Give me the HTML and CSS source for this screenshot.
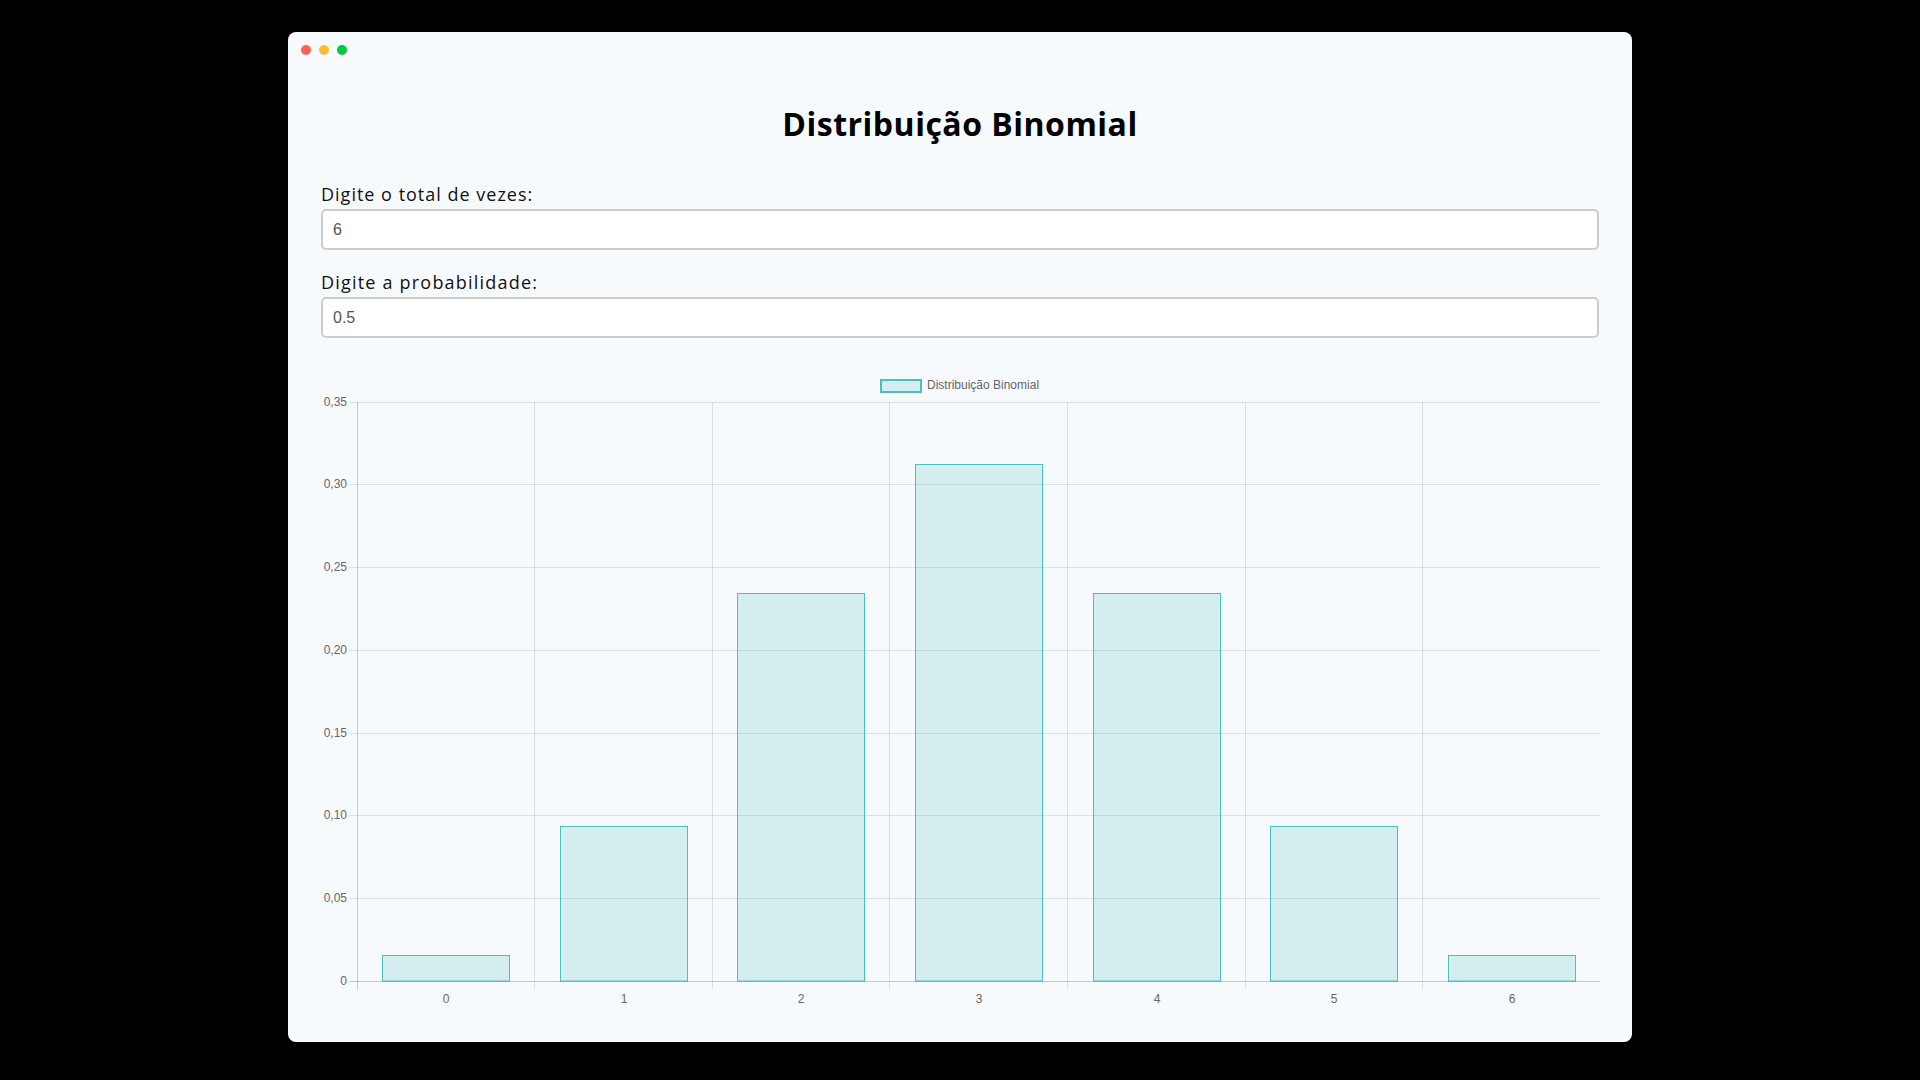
FILE: index.html
```html
<!DOCTYPE html>
<html lang="pt">
<head>
<meta charset="utf-8">
<title>Distribuição Binomial</title>
<link rel="stylesheet" href="styles.css">
</head>
<body>
<div class="window">
  <div class="titlebar">
    <span class="dot red"></span>
    <span class="dot yellow"></span>
    <span class="dot green"></span>
  </div>
  <div class="content">
    <h1 class="title">Distribuição Binomial</h1>
    <label class="label" for="n">Digite o total de vezes:</label>
    <input class="field" id="n" type="text" value="6">
    <label class="label label-second" for="p">Digite a probabilidade:</label>
    <input class="field" id="p" type="text" value="0.5">
    <svg class="chart" width="1279" height="680" viewBox="0 0 1279 680" xmlns="http://www.w3.org/2000/svg">
      <!-- legend -->
      <rect x="560" y="35" width="40" height="12" fill="rgba(75,192,192,0.2)" stroke="rgb(75,192,192)" stroke-width="2"/>
      <text class="tick" x="606" y="41" dominant-baseline="middle">Distribuição Binomial</text>

      <!-- horizontal grid -->
      <g stroke="rgba(0,0,0,0.1)" stroke-width="1">
        <line x1="28" y1="57.5" x2="1279" y2="57.5"/>
        <line x1="28" y1="139.5" x2="1279" y2="139.5"/>
        <line x1="28" y1="222.5" x2="1279" y2="222.5"/>
        <line x1="28" y1="305.5" x2="1279" y2="305.5"/>
        <line x1="28" y1="388.5" x2="1279" y2="388.5"/>
        <line x1="28" y1="470.5" x2="1279" y2="470.5"/>
        <line x1="28" y1="553.5" x2="1279" y2="553.5"/>
      </g>
      <!-- vertical grid -->
      <g stroke="rgba(0,0,0,0.1)" stroke-width="1">
        <line x1="213.5" y1="57" x2="213.5" y2="644"/>
        <line x1="391.5" y1="57" x2="391.5" y2="644"/>
        <line x1="568.5" y1="57" x2="568.5" y2="644"/>
        <line x1="746.5" y1="57" x2="746.5" y2="644"/>
        <line x1="924.5" y1="57" x2="924.5" y2="644"/>
        <line x1="1101.5" y1="57" x2="1101.5" y2="644"/>
      </g>

      <!-- bars -->
      <g fill="rgba(75,192,192,0.2)" stroke="rgb(75,192,192)" stroke-width="1">
        <rect x="61.5" y="610.5" width="127" height="25.5"/>
        <rect x="239.5" y="481.5" width="127" height="154.5"/>
        <rect x="416.5" y="248.5" width="127" height="387.5"/>
        <rect x="594.5" y="119.5" width="127" height="516.5"/>
        <rect x="772.5" y="248.5" width="127" height="387.5"/>
        <rect x="949.5" y="481.5" width="127" height="154.5"/>
        <rect x="1127.5" y="610.5" width="127" height="25.5"/>
      </g>

      <!-- axes -->
      <g stroke="rgba(0,0,0,0.2)" stroke-width="1">
        <line x1="36.5" y1="57" x2="36.5" y2="644"/>
        <line x1="28" y1="636.5" x2="1279" y2="636.5"/>
      </g>

      <!-- y labels -->
      <g class="tick" text-anchor="end" dominant-baseline="middle">
        <text x="26" y="58">0,35</text>
        <text x="26" y="140">0,30</text>
        <text x="26" y="223">0,25</text>
        <text x="26" y="306">0,20</text>
        <text x="26" y="389">0,15</text>
        <text x="26" y="471">0,10</text>
        <text x="26" y="554">0,05</text>
        <text x="26" y="637">0</text>
      </g>
      <!-- x labels -->
      <g class="tick" text-anchor="middle" dominant-baseline="middle">
        <text x="125" y="655">0</text>
        <text x="303" y="655">1</text>
        <text x="480" y="655">2</text>
        <text x="658" y="655">3</text>
        <text x="836" y="655">4</text>
        <text x="1013" y="655">5</text>
        <text x="1191" y="655">6</text>
      </g>
    </svg>
  </div>
</div>
</body>
</html>
```

FILE: styles.css
```css
* {
  box-sizing: border-box;
}

html, body {
  margin: 0;
  padding: 0;
  background: #000;
}

body {
  padding-top: 32px;
}

.window {
  width: 1344px;
  height: 1010px;
  margin: 0 auto;
  background: #f7fafd;
  border-radius: 8px;
  overflow: hidden;
}

.titlebar {
  height: 36px;
  padding-left: 13px;
  display: flex;
  align-items: center;
  gap: 8px;
}

.dot {
  width: 10px;
  height: 10px;
  border-radius: 50%;
  display: block;
}

.red { background: #ff5f57; }
.yellow { background: #ffbd2e; }
.green { background: #00c940; }

.content {
  padding: 0 33px;
  display: flex;
  flex-direction: column;
}

.title {
  margin: 36px 0 0;
  font-family: "Open Sans", "Noto Sans", sans-serif;
  font-weight: 700;
  font-size: 32px;
  line-height: 40px;
  text-align: center;
  color: #000;
  letter-spacing: 0.5px;
}

.label {
  margin-top: 36px;
  margin-bottom: 1px;
  font-family: "Open Sans", "Noto Sans", sans-serif;
  font-size: 18px;
  line-height: 28px;
  color: #111;
  letter-spacing: 1px;
}

.label-second {
  margin-top: 18px;
  letter-spacing: 1.2px;
}

.field {
  width: 100%;
  height: 41px;
  margin: 0;
  padding: 0 10px;
  border: 2px solid #cccccc;
  border-radius: 5px;
  background: #fff;
  font-family: "Liberation Sans", Arial, sans-serif;
  font-size: 16px;
  color: #555;
  outline: none;
}

.chart {
  display: block;
  margin-top: 7px;
}

.tick {
  font-family: "Liberation Sans", Arial, sans-serif;
  font-size: 12px;
  fill: #666;
}
```
